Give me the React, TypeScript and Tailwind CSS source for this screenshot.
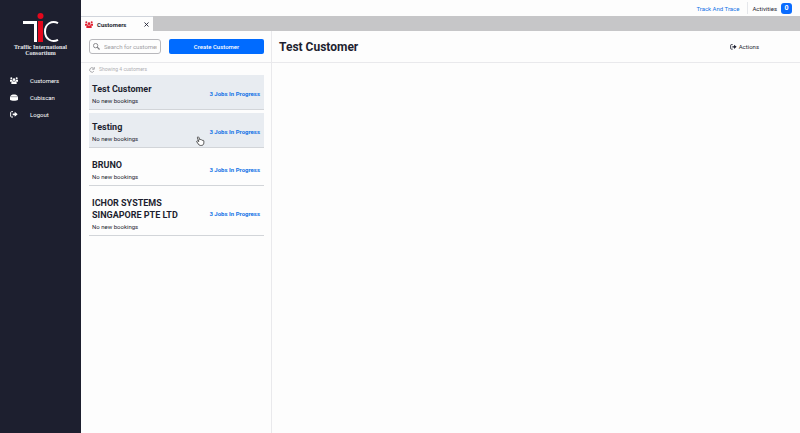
import { X } from "lucide-react";

const customers = [
  { name: "Test Customer", active: true },
  { name: "Testing", active: true },
  { name: "BRUNO", active: false },
  { name: "ICHOR SYSTEMS SINGAPORE PTE LTD", active: false },
];

type IconProps = { className?: string };

function PeopleIcon({ className }: IconProps) {
  return (
    <svg viewBox="0 0 24 21" className={className} fill="currentColor" aria-hidden="true">
      <circle cx="4" cy="4" r="3" />
      <circle cx="20" cy="4" r="3" />
      <circle cx="12" cy="8" r="4" />
      <path d="M0 8.500h7c0 3 1.500 4.500 3 5.500H0zM24 8.500h-7c0 3-1.500 4.500-3 5.500h10z" />
      <path d="M4 21v-4c0-2 2-3.500 4-3.500h8c2 0 4 1.500 4 3.500v4z" />
    </svg>
  );
}

function BoxIcon({ className }: IconProps) {
  return (
    <svg viewBox="0 0 24 21" className={className} fill="currentColor" aria-hidden="true">
      <path d="M2 5c3-5 17-5 20 0l2 3H0z" />
      <path d="M0 8h24v9c-4 4-20 4-24 0z" />
      <path d="M1 8.500h22" stroke="#1d1f2f" strokeWidth="1.800" opacity="0.400" />
    </svg>
  );
}

function ExitIcon({ className }: IconProps) {
  return (
    <svg viewBox="0 0 24 21" className={className} fill="currentColor" aria-hidden="true">
      <path d="M9 2H4.500C3 2 2 3 2 4.500v11C2 17 3 18 4.500 18H9" fill="none" stroke="currentColor" strokeWidth="3" />
      <path d="M8 7.500h6V2.500L23 10l-9 7.500V12.500H8z" />
    </svg>
  );
}

const links = [
  { label: "Customers", Icon: PeopleIcon },
  { label: "Cubiscan", Icon: BoxIcon },
  { label: "Logout", Icon: ExitIcon },
];

function Logo() {
  return (
    <div className="flex flex-col items-center pt-3">
      <svg viewBox="0 0 36 32" className="h-8 w-9" aria-hidden="true">
        <path d="M0 9h14v21h-3V12H0z" fill="#fff" />
        <circle cx="17.500" cy="4" r="3" fill="#e5071c" />
        <path d="M15 9h5v21h-5z" fill="#e5071c" />
        <path
          d="M35 11.200C29 7.800 22 12 22 19.500S29 31.200 35 27.800"
          fill="none"
          stroke="#fff"
          strokeWidth="2"
        />
      </svg>
      <p className="text-center font-['Liberation_Serif',serif] text-[6px] leading-[6px] font-bold text-gray-200">
        Traffic International
        <br />
        Consortium
      </p>
    </div>
  );
}

function Cursor() {
  return (
    <svg viewBox="0 0 16 18" className="absolute bottom-px left-[107px] h-[10px] w-[9px]" aria-hidden="true">
      <path
        d="M5 10L2.500 3.500C2 1.500 4.200.7 5 2.500L6.800 7c.5-1 2.300-.7 2.500.3.600-.9 2.100-.5 2.300.7.800-.7 2.400-.2 2.400 1.300V12c0 3-1.500 5-4.500 5H8c-2 0-3-1-4-2.700L1.300 10.500c-.8-1.500 1-2.500 2-1.300z"
        fill="#fff"
        stroke="#333"
        strokeWidth="1.500"
      />
    </svg>
  );
}

export default function App() {
  return (
    <div className="flex h-screen overflow-hidden bg-[#fdfdfd] font-['Roboto',sans-serif] text-[#1d1f30]">
      <aside className="w-[81px] shrink-0 bg-[#1d1f2f] text-white">
        <Logo />
        <nav className="mt-4 flex flex-col">
          {links.map(({ label, Icon }) => (
            <a key={label} href="#" className="flex h-[17px] items-center gap-3 pl-[10px] text-[6px]">
              <Icon className="h-[7px] w-2" />
              {label}
            </a>
          ))}
        </nav>
      </aside>
      <div className="flex min-w-0 flex-1 flex-col">
        <header className="flex h-4 shrink-0 items-center justify-end pr-2 text-[6px]">
          <a href="#" className="pr-2 text-[#1473e6]">Track And Trace</a>
          <div className="flex h-3 items-center gap-1 border-l border-gray-200 pl-1">
            Activities
            <span className="flex h-[11px] w-[11px] items-center justify-center rounded-[3px] bg-[#0a6cff] text-[7px] font-bold text-white">0</span>
          </div>
        </header>
        <div className="flex h-[15px] shrink-0 bg-[#c6c6c8]">
          <div className="flex w-[72px] items-center justify-between border-t border-gray-300 bg-[#fdfdfd] pr-[3px] pl-1 text-[6px] font-bold">
            <span className="flex items-center gap-1">
              <PeopleIcon className="h-[7px] w-2 text-[#e02030]" />
              Customers
            </span>
            <button aria-label="Close tab"><X className="size-[7px]" strokeWidth={3} /></button>
          </div>
        </div>
        <div className="flex min-h-0 flex-1">
          <section className="w-[191px] shrink-0 border-r border-[#e9e9ec]">
            <div className="flex h-8 items-center gap-2 border-b border-[#e9e9ec] pr-[7px] pl-2">
              <label className="flex h-[15px] w-[72px] items-center gap-1 rounded-[3px] border border-[#b8b8bc] px-[3px]">
                <svg viewBox="0 0 16 16" className="size-[7px] shrink-0" fill="none" stroke="#808084" strokeWidth="2" aria-hidden="true">
                  <circle cx="6" cy="6" r="5" />
                  <path d="M9.500 9.500L15 15" strokeWidth="3" />
                </svg>
                <input
                  aria-label="Search for customer"
                  placeholder="Search for customer"
                  className="min-w-0 flex-1 text-[6px] outline-none placeholder:text-[#a0a0a4]"
                />
              </label>
              <button className="h-[15px] min-w-0 flex-1 rounded-[2px] bg-[#006bff] text-[6px] font-medium text-white">Create Customer</button>
            </div>
            <div className="flex h-3 items-center gap-1 px-2 pt-px text-[5px] text-[#b0b0b4]">
              <svg viewBox="0 0 16 16" className="size-[6px]" fill="none" stroke="#808084" strokeWidth="1.800" aria-hidden="true">
                <path d="M13 11A6 6 0 1 1 12 3.500" />
                <path d="M14 0v6H8.500" />
              </svg>
              Showing 4 customers
            </div>
            <ul className="flex flex-col gap-[3px] pr-[7px] pl-2">
              {customers.map(({ name, active }, i) => (
                <li
                  key={name}
                  className={`relative flex items-center justify-between border-b border-[#d2d5d9] pt-2 pr-1 pb-[2px] pl-[3px] ${active ? "bg-[#e8ecf1]" : ""}`}
                >
                  <div className="w-[90px]">
                    <h2 className="text-[9px] leading-[12px] font-bold">{name}</h2>
                    <p className="text-[6px] leading-[12px]">No new bookings</p>
                  </div>
                  <a href="#" className="pb-1 text-[6px] font-bold text-[#1473e6]">3 Jobs In Progress</a>
                  {i === 1 && <Cursor />}
                </li>
              ))}
            </ul>
          </section>
          <main className="min-w-0 flex-1">
            <div className="flex h-8 items-center justify-between border-b border-[#e9e9ec] pr-[41px] pl-[7px]">
              <h1 className="text-[12px] font-bold">Test Customer</h1>
              <button className="flex items-center gap-[2px] text-[6px]">
                <ExitIcon className="h-[6px] w-[7px]" />
                Actions
              </button>
            </div>
          </main>
        </div>
      </div>
    </div>
  );
}
